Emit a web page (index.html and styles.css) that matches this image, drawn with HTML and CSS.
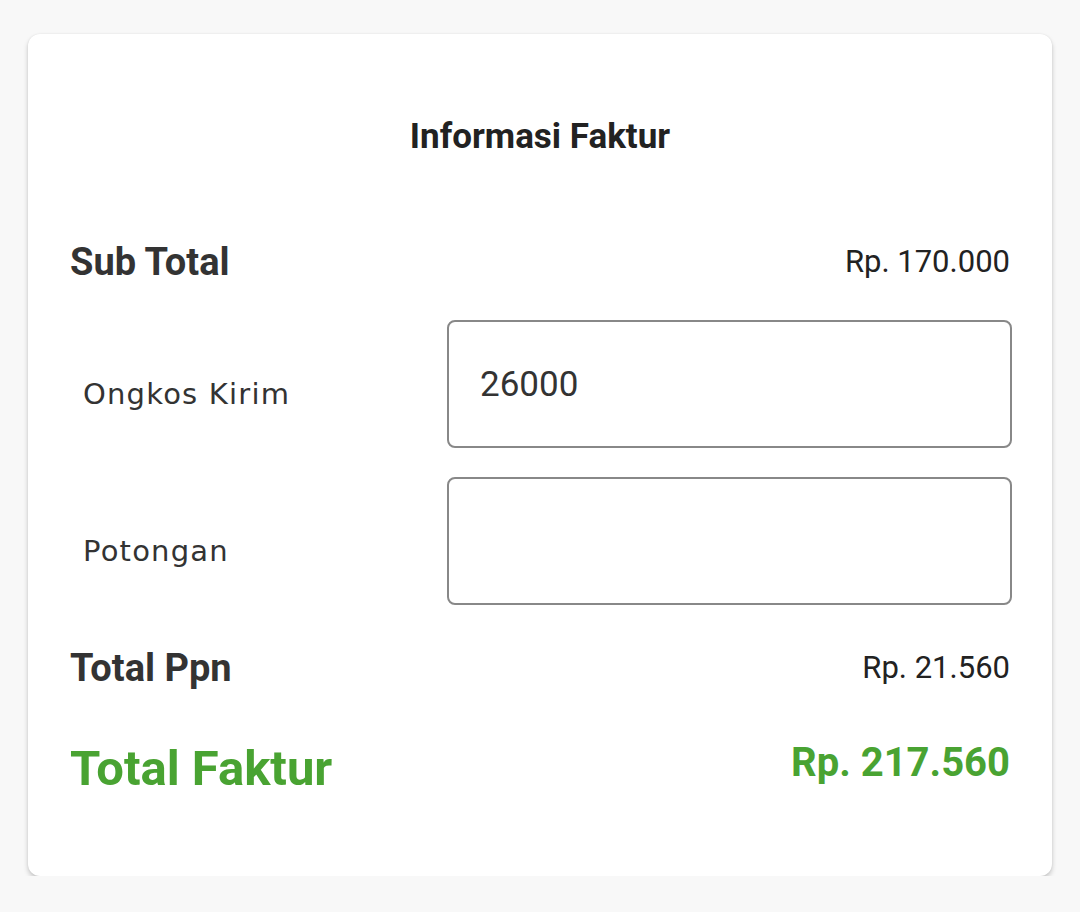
FILE: index.html
```html
<!DOCTYPE html>
<html lang="id">
<head>
    <meta charset="UTF-8">
    <meta name="viewport" content="width=device-width, initial-scale=1.0">
    <title>Informasi Faktur</title>
    <link rel="stylesheet" href="styles.css">
</head>
<body>
    <div class="card">
        <div class="title">Informasi Faktur</div>

        <div class="row sub-total">
            <div class="label">Sub Total</div>
            <div class="value">Rp. 170.000</div>
        </div>

        <div class="field first">
            <div class="field-label">Ongkos Kirim</div>
            <input class="field-input" type="text" value="26000">
        </div>

        <div class="field">
            <div class="field-label">Potongan</div>
            <input class="field-input" type="text" value="">
        </div>

        <div class="row ppn">
            <div class="label">Total Ppn</div>
            <div class="value">Rp. 21.560</div>
        </div>

        <div class="row grand">
            <div class="label">Total Faktur</div>
            <div class="value">Rp. 217.560</div>
        </div>
    </div>
</body>
</html>
```

FILE: styles.css
```css
body {
    margin: 0;
    background-color: #f8f8f8;
    font-family: Roboto, "Liberation Sans", sans-serif;
    color: #333;
    padding: 34px 28px 0 28px;
}

.card {
    background-color: #fff;
    border-radius: 12px;
    box-shadow: 0 3px 5px rgba(0, 0, 0, 0.2), 0 0 2px rgba(0, 0, 0, 0.08);
    padding: 83px 42px 79px 42px;
}

.title {
    text-align: center;
    font-size: 35px;
    font-weight: 700;
    line-height: 40px;
    color: #222;
}

.row {
    display: flex;
    justify-content: space-between;
    align-items: center;
}

.label {
    font-size: 38px;
    font-weight: 700;
    line-height: 44px;
}

.value {
    font-size: 31px;
    line-height: 44px;
    color: #222;
}

.sub-total {
    margin-top: 83px;
}

.field {
    display: flex;
    align-items: center;
    margin-top: 29px;
}

.field.first {
    margin-top: 36px;
}

.field-label {
    width: 364px;
    padding-left: 13px;
    padding-top: 20px;
    font-family: "DejaVu Sans", sans-serif;
    font-size: 29px;
    letter-spacing: 1.2px;
    color: #333;
}

.field-input {
    flex: 1;
    box-sizing: border-box;
    height: 128px;
    margin: 0 -2px 0 0;
    border: 2px solid #888;
    border-radius: 8px;
    padding: 0 31px;
    font-family: Roboto, sans-serif;
    font-size: 35px;
    color: #333;
    outline: none;
}

.ppn {
    margin-top: 41px;
}

.grand {
    margin-top: 51px;
    color: #49a332;
}

.grand .label {
    font-size: 49px;
    line-height: 56px;
}

.grand .value {
    font-size: 40px;
    font-weight: 700;
    line-height: 56px;
    color: #49a332;
    margin-top: -12px;
}
```
